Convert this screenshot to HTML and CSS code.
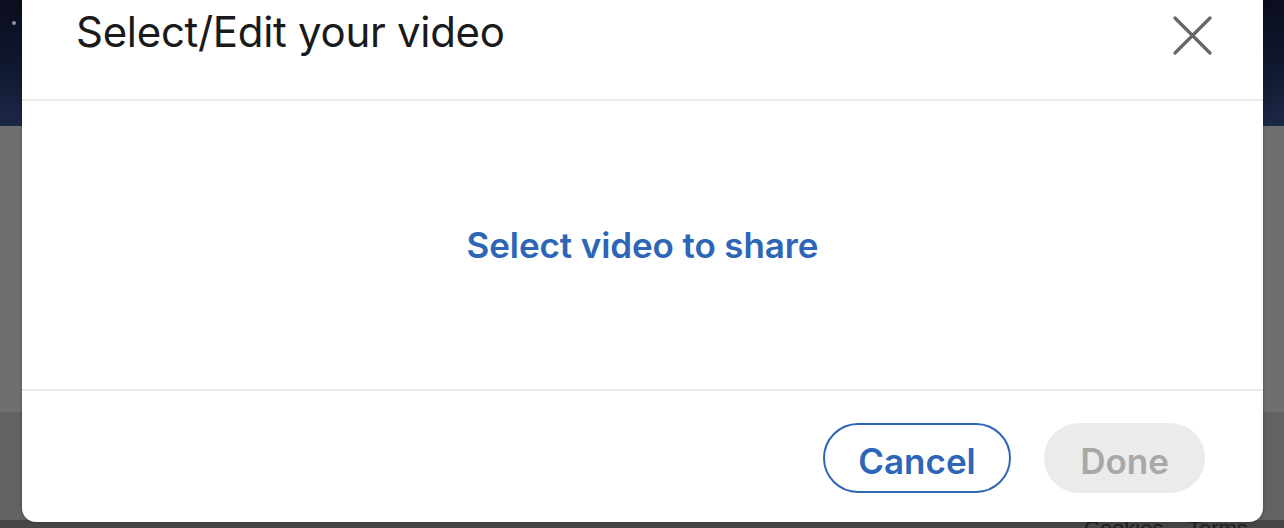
FILE: index.html
```html
<!DOCTYPE html>
<html lang="en">
<head>
<meta charset="utf-8">
<title>Select/Edit your video</title>
<link rel="stylesheet" href="styles.css">
</head>
<body>
<div class="backdrop">
  <div class="band-top"><span class="star"></span></div>
  <div class="band-mid"></div>
  <div class="band-low"></div>
  <div class="band-foot"><span class="foot-links">Cookies&nbsp;&nbsp;&nbsp;&nbsp;Terms</span></div>
</div>

<div class="modal" role="dialog">
  <header class="modal-header">
    <h1 class="modal-title">Select/Edit your video</h1>
    <button class="close-btn" aria-label="Close">
      <svg width="39" height="39" viewBox="0 0 39 39" aria-hidden="true">
        <path d="M2 2 L37 37 M37 2 L2 37" stroke="#666666" stroke-width="3.2" stroke-linecap="round" fill="none"/>
      </svg>
    </button>
  </header>
  <div class="modal-body">
    <a class="select-link" href="#">Select video to share</a>
  </div>
  <footer class="modal-footer">
    <button class="btn btn-outline">Cancel</button>
    <button class="btn btn-disabled" disabled>Done</button>
  </footer>
</div>
</body>
</html>
```

FILE: styles.css
```css
html, body {
  margin: 0;
  padding: 0;
}
body {
  width: 1284px;
  height: 528px;
  overflow: hidden;
  position: relative;
  font-family: Inter, "Liberation Sans", Arial, sans-serif;
}
.backdrop {
  display: flex;
  flex-direction: column;
  height: 528px;
}
.band-top {
  height: 126px;
  background: linear-gradient(180deg, #0a0d1c 0%, #111a33 60%, #1b2846 100%);
  position: relative;
}
.star {
  position: absolute;
  left: 12px;
  top: 21px;
  width: 4px;
  height: 4px;
  border-radius: 50%;
  background: #8f93a0;
  filter: blur(0.6px);
}
.band-mid {
  height: 286px;
  background: #6f6f6f;
}
.band-low {
  height: 108px;
  background: #626262;
}
.band-foot {
  flex: 1;
  background: #454545;
  position: relative;
}
.foot-links {
  position: absolute;
  left: 1084px;
  top: -4px;
  font-family: "Liberation Sans", Arial, sans-serif;
  font-size: 22px;
  color: #1e1e1e;
}
.modal {
  position: absolute;
  left: 22px;
  top: 0;
  width: 1241px;
  height: 522px;
  background: #ffffff;
  border-radius: 0 0 14px 14px;
  box-shadow: 0 0 3px rgba(0,0,0,0.35);
  display: flex;
  flex-direction: column;
}
.modal-header {
  height: 99px;
  border-bottom: 2px solid #ebebeb;
  display: flex;
  align-items: flex-start;
  justify-content: space-between;
  padding: 0 51px 0 54px;
}
.modal-title {
  margin: 7px 0 0 0;
  font-size: 42px;
  font-weight: 400;
  color: #1a1a1a;
  letter-spacing: -0.3px;
  line-height: 50px;
}
.close-btn {
  margin-top: 16px;
  padding: 0;
  border: 0;
  background: none;
  width: 39px;
  height: 39px;
  cursor: pointer;
}
.close-btn svg {
  display: block;
}
.modal-body {
  height: 288px;
  border-bottom: 2px solid #ebebeb;
  display: flex;
  align-items: center;
  justify-content: center;
}
.select-link {
  font-size: 35px;
  font-weight: 600;
  color: #2d65b7;
  text-decoration: none;
  letter-spacing: -0.1px;
  margin-top: 0;
}
.modal-footer {
  flex: 1;
  display: flex;
  justify-content: flex-end;
  align-items: flex-start;
  gap: 33px;
  padding: 32px 58px 0 0;
}
.btn {
  height: 70px;
  border-radius: 35px;
  font-family: Inter, "Liberation Sans", Arial, sans-serif;
  font-size: 35px;
  font-weight: 600;
  padding: 5px 0 0 0;
  cursor: pointer;
}
.btn-outline {
  width: 188px;
  background: #ffffff;
  border: 2px solid #2d65b7;
  color: #2d65b7;
}
.btn-disabled {
  width: 161px;
  background: #ebebeb;
  border: 0;
  color: #a8a8a8;
  cursor: default;
}
```
